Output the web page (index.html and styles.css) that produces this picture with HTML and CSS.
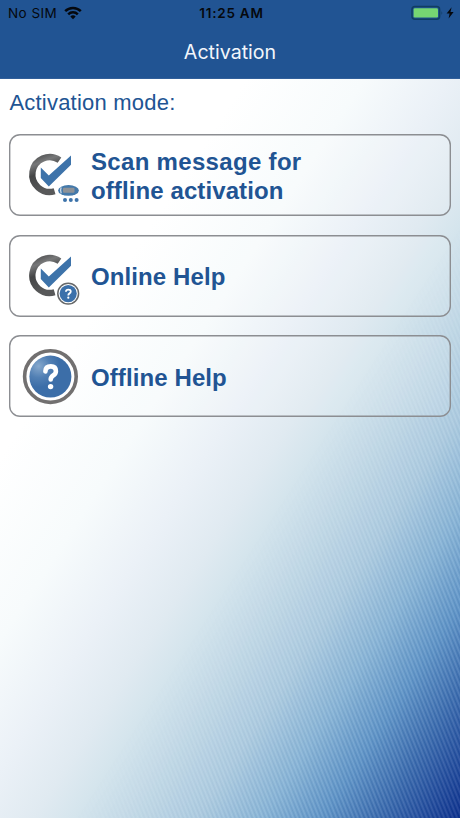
FILE: index.html
```html
<!DOCTYPE html>
<html lang="en">
<head>
<meta charset="utf-8">
<title>Activation</title>
<link rel="stylesheet" href="styles.css">
</head>
<body>
<div class="screen">
  <header class="top">
    <div class="status">
      <div class="carrier"><span>No SIM</span>
        <svg class="wifi" width="18" height="14" viewBox="0 0 18 14"><g fill="none" stroke="#05080d" stroke-width="2.5"><path d="M1.2 5.2a11 11 0 0 1 15.6 0"/><path d="M4.2 8.3a6.8 6.8 0 0 1 9.6 0"/></g><path d="M9 13.2 6.3 10.5a3.8 3.8 0 0 1 5.4 0z" fill="#05080d"/></svg>
      </div>
      <div class="time">11:25 AM</div>
      <svg class="battery" width="44" height="16" viewBox="0 0 44 16"><rect x="1" y="1.6" width="27.6" height="12.6" rx="3" fill="#215493" stroke="#103d62" stroke-width="1.5"/><rect x="2.6" y="3.2" width="24.4" height="9.4" rx="1.3" fill="#76d672"/><path d="M30.5 6q1.6 2 0 4z" fill="#103d62"/><path d="M40.6 2.2 35.6 8.5h3L37.6 13.4 42.6 7h-3.1z" fill="#05080d"/></svg>
    </div>
    <h1 class="title">Activation</h1>
  </header>
  <main class="content">
    <h2 class="mode">Activation mode:</h2>
    <button class="card">
      <svg class="icon" width="60" height="60" viewBox="0 0 60 60">
        <defs><linearGradient id="ring" x1="0" y1="0" x2=".3" y2="1"><stop offset="0" stop-color="#505152"/><stop offset=".22" stop-color="#777879"/><stop offset=".5" stop-color="#444546"/><stop offset="1" stop-color="#58595a"/></linearGradient></defs>
        <g id="check"><path d="M39.5 15.1A17.4 17.4 0 1 0 34.6 46.2" fill="none" stroke="url(#ring)" stroke-width="6.4"/><path d="M20.8 22.6 28.8 30.6 51 10.6V19.8L28.8 41.6 20.8 33z" fill="#3d73aa"/></g>
        <ellipse cx="48.4" cy="45.4" rx="11.6" ry="6.6" fill="#fff"/><ellipse cx="48.5" cy="45.4" rx="10.4" ry="5.3" fill="#4479aa"/><rect x="43" y="42.8" width="11.5" height="5" rx="1" fill="#8d9298"/><path d="M41.2 42.4q-1.5 3 0 6" fill="none" stroke="#c9d9e7" stroke-width="1.3"/>
        <circle cx="45" cy="55" r="2" fill="#3d73aa"/><circle cx="50.8" cy="55" r="2" fill="#3d73aa"/><circle cx="56.6" cy="55" r="2" fill="#3d73aa"/>
      </svg>
      <span class="label"><span class="wide">Scan message for</span><br>offline activation</span>
    </button>
    <button class="card">
      <svg class="icon" width="60" height="60" viewBox="0 0 60 60">
        <use href="#check"/>
        <circle cx="48.2" cy="47.6" r="12.6" fill="#fff"/><circle cx="48.2" cy="47.6" r="10.4" fill="#fff" stroke="#666869" stroke-width="1.5"/><circle cx="48.2" cy="47.6" r="8.6" fill="#3b70aa"/>
        <path d="M45.9 45.7q.1-2.1 2.4-2.1c3.4 0 2.9 3 1 4q-1 .5-1 1.8" fill="none" stroke="#fff" stroke-width="1.8"/><circle cx="48.3" cy="51.7" r="1.1" fill="#fff"/>
      </svg>
      <span class="label">Online Help</span>
    </button>
    <button class="card">
      <svg class="icon" width="60" height="60" viewBox="0 0 60 60">
        <defs><radialGradient id="ball" cx=".22" cy=".25" r=".5"><stop offset="0" stop-color="#87a9cd"/><stop offset=".55" stop-color="#5280b4"/><stop offset="1" stop-color="#3c6ea8"/></radialGradient></defs>
        <circle cx="30.4" cy="30.6" r="25.8" fill="#fff" stroke="#727070" stroke-width="3.6"/><circle cx="30.4" cy="30.6" r="21" fill="url(#ball)"/>
        <path d="M25.4 25.4q.2-5 5.4-5 5.1.1 5.1 4.8 0 2.5-2.8 4.3-2.4 1.6-2.4 4" fill="none" stroke="#fff" stroke-width="4.6" stroke-linecap="round"/><circle cx="30.6" cy="40.6" r="2.7" fill="#fff"/>
      </svg>
      <span class="label">Offline Help</span>
    </button>
  </main>
</div>
</body>
</html>
```
FILE: styles.css
```css
* { box-sizing: border-box; }
body { margin: 0; font-family: "Liberation Sans", Arial, sans-serif; }
.screen {
  position: relative;
  height: 818px;
  overflow: hidden;
  background: linear-gradient(123deg, #fff 30%, #f7fbfc 42%, #ebf1f7 50.5%, #e0eaf1 57%, #d5e5ed 61%, #c8dde9 65.5%, #b0cee2 73.5%, #8cb8d9 80%, #6197ca 86%, #3a6cb0 91.5%, #082c8c 100%);
}
.screen::before {
  content: "";
  position: absolute;
  inset: 0;
  background: repeating-linear-gradient(68deg, rgba(255,255,255,.12) 0, rgba(10,50,110,.13) 2px, rgba(255,255,255,.12) 4px);
  -webkit-mask-image: linear-gradient(123deg, transparent 61%, #000 90%);
  mask-image: linear-gradient(123deg, transparent 61%, #000 90%);
}
.top { position: relative; height: 79px; background: #215493; border-bottom: 1px solid #315f9a; }
.status {
  display: grid;
  grid-template-columns: 1fr auto 1fr;
  align-items: center;
  height: 26px;
  padding: 0 5px 0 8px;
  font-family: Inter, sans-serif;
  font-size: 13.5px;
  color: #05080d;
}
.carrier { display: flex; align-items: center; gap: 7px; letter-spacing: .45px; }
.time { font-weight: 600; letter-spacing: .75px; }
.battery { justify-self: end; }
.title { margin: 11px 0 0; font: 400 19.6px/31px Inter, sans-serif; text-align: center; color: #f2f6fb; }
.content { position: relative; padding: 10px 9.4px 0; }
.mode { margin: 0 0 18.4px; font-size: 22px; font-weight: 400; line-height: 27px; letter-spacing: .22px; color: #215493; }
.card {
  display: flex;
  align-items: center;
  width: 100%;
  height: 82px;
  margin: 0 0 18.5px;
  padding: 0 10.6px;
  border: 0;
  border-radius: 11px;
  background: rgba(255,255,255,.12);
  box-shadow: inset 0 0 0 1.4px #8c8e92;
  font-family: inherit;
  text-align: left;
  color: #215493;
}
.icon { flex: none; margin-right: 11px; }
.label { padding-top: 2px; font-size: 24px; font-weight: 700; line-height: 29px; letter-spacing: .1px; }
.wide { letter-spacing: .32px; }
```
